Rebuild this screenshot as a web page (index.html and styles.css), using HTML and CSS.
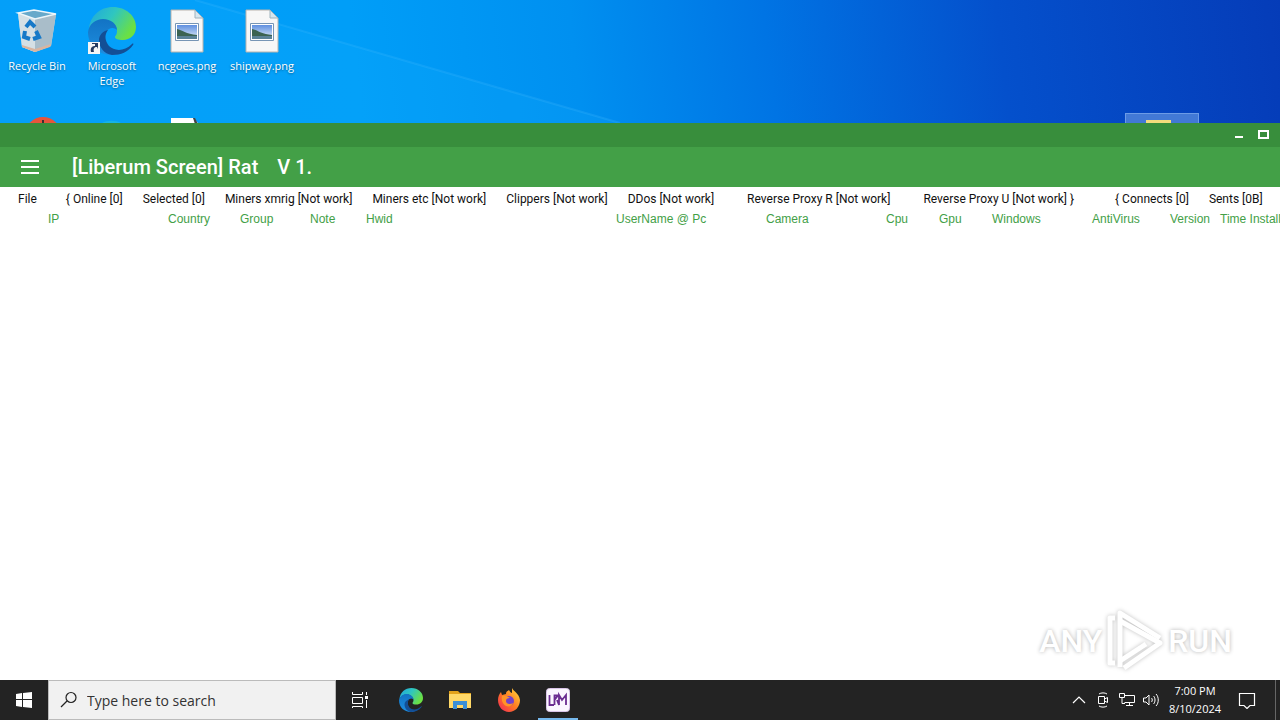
FILE: index.html
```html
<!DOCTYPE html>
<html lang="en">
<head>
    <meta charset="UTF-8">
    <title>Desktop</title>
    <link rel="stylesheet" href="styles.css">
</head>
<body>
<svg class="defs" aria-hidden="true">
    <defs>
        <linearGradient id="edgeGreen" x1="0" y1="0" x2="1" y2="0.5">
            <stop offset="0" stop-color="#1fa5e0"/>
            <stop offset="0.5" stop-color="#2fc6c0"/>
            <stop offset="1" stop-color="#6be043"/>
        </linearGradient>
        <linearGradient id="edgeBlue" x1="0" y1="0" x2="0" y2="1">
            <stop offset="0" stop-color="#1273c4"/>
            <stop offset="1" stop-color="#1e8fe0"/>
        </linearGradient>
        <linearGradient id="sky" x1="0" y1="0" x2="0" y2="1">
            <stop offset="0" stop-color="#5f8fe0"/>
            <stop offset="1" stop-color="#e6f0f8"/>
        </linearGradient>
        <linearGradient id="fire" x1="1" y1="0" x2="0" y2="1">
            <stop offset="0" stop-color="#ffe23e"/>
            <stop offset="0.5" stop-color="#ff7a22"/>
            <stop offset="1" stop-color="#f0235c"/>
        </linearGradient>
        <symbol id="edge" viewBox="0 0 48 48">
            <path d="M1 22C2 9 12 0 25 0c13 0 23 9 23 20 0 8-6 13-13 13-5 0-8-1-8-3 0-1 2-2 2-6 0-6-6-11-13-11C9 13 3 17 1 22z" fill="url(#edgeGreen)"/>
            <path d="M0 25C1 17 8 12 15 12c8 0 14 5 14 11-2-2-5-3-8-1-4 2-5 7-3 13 2 7 8 12 14 12-3 1-5 1-8 1C10 48 0 38 0 25z" fill="url(#edgeBlue)"/>
            <path d="M20 23c-4 5-3 11 1 16 5 5 15 6 23-2 1-1 2 0 1 1-5 7-12 10-21 10-8-1-13-8-13-15 0-5 4-9 9-10z" fill="#134f96"/>
        </symbol>
        <symbol id="picture" viewBox="0 0 48 48">
            <path d="M8 3h24l8 8v34H8z" fill="#f7f7f7" stroke="#b9b3ad"/>
            <path d="M32 3v8h8z" fill="#d6e6ef" stroke="#9fb2bd"/>
            <path d="M12.500 16.500h23v17h-23z" fill="#fff" stroke="#7795b5"/>
            <path d="M14 18h20v14H14z" fill="url(#sky)"/>
            <path d="M14 22c5 1 9 5 20 6v2H14z" fill="#3b6351"/>
            <path d="M14 29h20v3H14z" fill="#5a8296"/>
        </symbol>
    </defs>
</svg>

<main class="desktop">
    <svg class="beam" viewBox="0 0 1280 123" preserveAspectRatio="none" aria-hidden="true">
        <path d="M195 0L620 123H0V0z" fill="#19b4ff" opacity="0.15"/>
        <path d="M195 0L620 123" stroke="#4fc0ff" stroke-width="2" opacity="0.2"/>
    </svg>
    <ul class="icons">
        <li class="icon">
            <svg viewBox="0 0 48 48">
                <path d="M5 6l38 1-5 32-16 6-13-5z" fill="#c9d7df"/>
                <path d="M22 12l21-5-5 32-16 6z" fill="#a9bdc9"/>
                <path d="M5 6l17 6v33L9 40z" fill="#d5e0e5"/>
                <path d="M5 6l16-3 22 4-21 5z" fill="#68a9ca" stroke="#eef6fa" stroke-width="1.500"/>
                <path d="M9 38l13 4 16-5-1 3-15 5-13-5z" fill="#d9b5a0"/>
                <g fill="none" stroke="#1679c8" stroke-width="4">
                    <path d="M13 20l4-5 5 5"/>
                    <path d="M23 24l3 6-6 2"/>
                    <path d="M17 32l-6-2 1-6"/>
                </g>
            </svg>
            <span>Recycle Bin</span>
        </li>
        <li class="icon">
            <svg viewBox="0 0 48 48">
                <use href="#edge"/>
                <path d="M0 35h12v12H0z" fill="#f5f5f5"/>
                <path d="M3 45c-1-4 1-6 4-6v-2H4v-1h6v6l-1-2c-3 0-4 2-3 5z" fill="#25395f"/>
            </svg>
            <span>Microsoft Edge</span>
        </li>
        <li class="icon">
            <svg><use href="#picture"/></svg>
            <span>ncgoes.png</span>
        </li>
        <li class="icon">
            <svg><use href="#picture"/></svg>
            <span>shipway.png</span>
        </li>
        <li class="icon second">
            <svg viewBox="0 0 48 48">
                <circle cx="30" cy="21" r="18" fill="#e6553c"/>
                <path d="M29 6h2v5h-2z" fill="#3c2f2f"/>
            </svg>
        </li>
        <li class="icon second">
            <svg viewBox="0 0 48 48"><path d="M14 9c5-3 14-3 19 0z" fill="#16b3e6"/></svg>
        </li>
        <li class="icon second">
            <svg viewBox="0 0 48 48"><path d="M8 4h22l6 6v34H8z" fill="#fff"/><path d="M30 4h2l3 6h-3z" fill="#444"/></svg>
        </li>
        <li class="icon second folder">
            <svg viewBox="0 0 48 48"><path d="M8 6h25v30H8z" fill="#f3dc7c"/></svg>
        </li>
    </ul>
</main>

<section class="window">
    <div class="caption">
        <button class="caption-btn" aria-label="Minimize"><svg viewBox="0 0 12 12"><path d="M2 9h8" stroke="#fff" stroke-width="2"/></svg></button>
        <button class="caption-btn" aria-label="Maximize"><svg viewBox="0 0 12 12"><path d="M2 3h9v7H2z" fill="none" stroke="#fff" stroke-width="2"/></svg></button>
    </div>
    <header class="title-bar">
        <button class="drawer-btn" aria-label="Menu"><svg viewBox="0 0 18 16"><path d="M0 2h18M0 8h18M0 14h18" stroke="#fff" stroke-width="2"/></svg></button>
        <h1 class="title">[Liberum Screen] Rat</h1>
        <span class="title">V 1.</span>
    </header>
    <nav class="menu">
        <button>File</button>
        <button class="apart">{ Online [0]</button>
        <button>Selected [0]</button>
        <button>Miners xmrig [Not work]</button>
        <button>Miners etc [Not work]</button>
        <button>Clippers [Not work]</button>
        <button>DDos [Not work]</button>
        <button class="proxy">Reverse Proxy R [Not work]</button>
        <button class="proxy">Reverse Proxy U [Not work] }</button>
        <button class="totals">{ Connects [0]</button>
        <button>Sents [0B]</button>
    </nav>
    <div class="list">
        <table class="clients">
            <colgroup>
                <col class="w120"><col class="w72"><col class="w70"><col class="w56"><col class="w250">
                <col class="w150"><col class="w120"><col class="w53"><col class="w53"><col class="w100">
                <col class="w78"><col class="w50"><col class="w120">
            </colgroup>
            <thead>
                <tr>
                    <th>IP</th>
                    <th>Country</th>
                    <th>Group</th>
                    <th>Note</th>
                    <th>Hwid</th>
                    <th>UserName @ Pc</th>
                    <th>Camera</th>
                    <th>Cpu</th>
                    <th>Gpu</th>
                    <th>Windows</th>
                    <th>AntiVirus</th>
                    <th>Version</th>
                    <th>Time Install</th>
                </tr>
            </thead>
        </table>
    </div>
    <div class="watermark">
        <span>ANY</span>
        <svg viewBox="0 0 58 64">
            <g fill="none" stroke="#fff" stroke-width="5" stroke-linejoin="round">
                <path d="M9 9H4v45h5"/>
                <path d="M14 58V4l40 25"/>
                <path d="M14 12l40 22-36 25"/>
                <path d="M14 52l26-17"/>
            </g>
        </svg>
        <span>RUN</span>
    </div>
</section>

<footer class="taskbar">
    <button class="start" aria-label="Start">
        <svg viewBox="0 0 16 16"><path d="M0 2l6-1v6H0zM7 1l9-1v7H7zM0 8h6v7l-6-1zM7 8h9v8l-9-1z" fill="#fff"/></svg>
    </button>
    <label class="search">
        <svg viewBox="0 0 18 18"><g fill="none" stroke="#222" stroke-width="1.200"><circle cx="11" cy="6.500" r="5"/><path d="M7 10L1 16"/></g></svg>
        <input type="text" placeholder="Type here to search" aria-label="Search">
    </label>
    <div class="pinned">
        <button class="task" aria-label="Task View">
            <svg class="small" viewBox="0 0 18 18"><path d="M1.500 1v2.500h10V1M1.500 6.500h10v6h-10zM1.500 17v-1.500h10V17M15.500 1v3M15.500 9v8" fill="none" stroke="#fff"/><path d="M14 5h3v3h-3z" fill="#fff"/></svg>
        </button>
        <button class="task" aria-label="Edge"><svg><use href="#edge"/></svg></button>
        <button class="task" aria-label="File Explorer">
            <svg viewBox="0 0 24 24">
                <path d="M1 3h9l2 2h11v4H1z" fill="#e3a21a"/>
                <path d="M1 6h22v14H1z" fill="#ffd867"/>
                <path d="M5 21v-8h14v8h-4v-4H9v4z" fill="#3a8fd6"/>
            </svg>
        </button>
        <button class="task" aria-label="Firefox">
            <svg viewBox="0 0 24 24">
                <path d="M15 0c1 3 7 5 8 12 0 7-5 12-11 12S1 19 1 12c0-3 1-6 3-8l1 3 4-1c0-3 2-3 3-4 1 2 2 3 3 3z" fill="url(#fire)"/>
                <circle cx="12" cy="13" r="5" fill="#7442c8"/>
                <path d="M5 8c3-1 5 0 8 2-3 0-4 1-4 3 0 3 4 4 7 2-1 3-4 4-7 3-3-2-5-5-4-10z" fill="#ff9427"/>
            </svg>
        </button>
        <button class="task active" aria-label="LRM">
            <svg viewBox="0 0 24 24">
                <rect x="0.500" y="0.500" width="23" height="23" rx="3" fill="#fbf6ff" stroke="#d9c5e8"/>
                <path d="M3.500 7v10H8M8.500 17V7.500H12L8.500 12M11 12l2 5V7l3 5 4-5v10" fill="none" stroke="#6b2d91" stroke-width="1.800"/>
            </svg>
        </button>
    </div>
    <div class="tray">
        <svg viewBox="0 0 16 16"><path d="M2 11l6-6 6 6" fill="none" stroke="#fff" stroke-width="1.200"/></svg>
        <svg viewBox="0 0 16 16"><path d="M4 2c2-1.500 6-1.500 8 0M4 14c2 1.500 6 1.500 8 0M3.500 4.500h6v7h-6zM9.500 7l3-1.500v5l-3-1.500" fill="none" stroke="#fff"/></svg>
        <svg viewBox="0 0 16 16"><path d="M5.500 3.500h10v7h-10M10.500 10.500v3M7 13.500h7M.500 1.500h5v4h-5zM3 5.500v6h3" fill="none" stroke="#fff"/></svg>
        <svg viewBox="0 0 16 16"><path d="M.500 6v4H3l3 3V3L3 6zM8.500 6c1 1 1 3 0 4M10.500 4c2 2 2 6 0 8M13 2c3 3 3 9 0 12" fill="none" stroke="#fff"/></svg>
    </div>
    <div class="clock">
        <time>7:00 PM</time>
        <time>8/10/2024</time>
    </div>
    <button class="notify" aria-label="Notifications">
        <svg viewBox="0 0 18 18"><path d="M1.500 2.500h15v12H12l-3 3-3-3H1.500z" fill="none" stroke="#fff" stroke-width="1.200"/></svg>
    </button>
    <button class="peek" aria-label="Show desktop"></button>
</footer>
</body>
</html>
```
FILE: styles.css
```css
* {
    padding: 0;
    margin: 0;
    box-sizing: border-box;
    list-style: none;
}

body {
    display: flex;
    flex-direction: column;
    height: 100vh;
    overflow: hidden;
    font-family: "Open Sans", "Noto Sans", sans-serif;
    font-size: 12px;
}

button, input {
    border: 0;
    background: none;
    font: inherit;
    color: inherit;
}

svg {
    display: block;
    flex: none;
}

.defs {
    position: absolute;
    width: 0;
    height: 0;
}

/* desktop */
.desktop {
    position: relative;
    flex: none;
    height: 123px;
    overflow: hidden;
    background: linear-gradient(83deg, #009cf8 0%, #009ef8 28%, #0090f0 45%, #0074e4 60%, #0450cc 78%, #053cb8 100%);
}

.beam {
    position: absolute;
    width: 100%;
    height: 100%;
}

.icons {
    position: relative;
    display: grid;
    grid-template-columns: repeat(auto-fill, 75px);
    grid-auto-rows: 107px;
    padding-top: 6px;
}

.icon {
    display: flex;
    flex-direction: column;
    align-items: center;
    gap: 3px;
    margin-right: 1px;
    padding-top: 1px;
    font-size: 11px;
    line-height: 15px;
    text-align: center;
    color: #fff;
    text-shadow: 0 1px 2px rgba(0, 0, 0, 0.4);
}

.icon svg {
    width: 48px;
    height: 48px;
}

.second {
    grid-row: 2;
}

.folder {
    grid-column: 16;
    background: #4279d6;
    border: 1px solid #6c9be6;
    padding-top: 0;
}

/* application window */
.window {
    position: relative;
    flex: 1;
    min-height: 0;
    overflow: hidden;
    background: #fff;
    font-family: "Liberation Sans", Arial, sans-serif;
}

.caption {
    display: flex;
    justify-content: flex-end;
    gap: 12px;
    height: 24px;
    padding: 5px 11px 0 0;
    background: #388e3c;
}

.caption-btn,
.caption-btn svg {
    width: 12px;
    height: 12px;
}

.title-bar {
    display: flex;
    align-items: center;
    gap: 19px;
    height: 40px;
    padding-left: 21px;
    background: #43a047;
    color: #fff;
}

.drawer-btn {
    margin-right: 14px;
}

.drawer-btn svg {
    width: 18px;
    height: 16px;
}

.title {
    font: 500 20px/24px Roboto, sans-serif;
    white-space: nowrap;
}

.menu {
    display: flex;
    gap: 20px;
    height: 24px;
    padding-left: 18px;
    font-family: Roboto, sans-serif;
    line-height: 24px;
    color: #111;
}

.menu button {
    flex: none;
    white-space: nowrap;
}

.menu .apart {
    margin-left: 9px;
}

.menu .proxy {
    margin-left: 13px;
}

.menu .totals {
    margin-left: 21px;
}

.list {
    overflow: hidden;
    padding-left: 48px;
}

.clients {
    table-layout: fixed;
    width: 1292px;
    border-collapse: collapse;
}

.clients th {
    line-height: 16px;
    font-weight: normal;
    text-align: left;
    white-space: nowrap;
    color: #43a047;
}

.w50 { width: 50px; }
.w53 { width: 53px; }
.w56 { width: 56px; }
.w70 { width: 70px; }
.w72 { width: 72px; }
.w78 { width: 78px; }
.w100 { width: 100px; }
.w120 { width: 120px; }
.w150 { width: 150px; }
.w250 { width: 250px; }

.watermark {
    position: absolute;
    right: 48px;
    bottom: 7px;
    display: flex;
    align-items: center;
    gap: 4px;
    font: 500 32px/40px "Liberation Sans Narrow", Roboto, sans-serif;
    color: #fff;
    text-shadow: 0 0 4px rgba(0, 0, 0, 0.3);
}

.watermark svg {
    width: 58px;
    height: 64px;
    filter: drop-shadow(0 0 2px rgba(0, 0, 0, 0.25));
}

/* taskbar */
.taskbar {
    display: flex;
    flex: none;
    height: 40px;
    background: #232323;
    color: #fff;
}

.taskbar button {
    display: flex;
    align-items: center;
    justify-content: center;
    width: 48px;
}

.start svg {
    width: 16px;
    height: 16px;
}

.search {
    display: flex;
    align-items: center;
    gap: 9px;
    width: 288px;
    padding-left: 11px;
    border: 1px solid #bbb;
    background: #f1f1f1;
}

.search svg {
    width: 18px;
    height: 18px;
}

.search input {
    width: 230px;
    font-size: 14px;
    color: #333;
    outline: 0;
}

.search input::placeholder {
    color: #333;
}

.pinned {
    display: flex;
    flex: 1;
    gap: 9px;
    padding-left: 6px;
}

.taskbar .task {
    width: 40px;
}

.task svg {
    width: 24px;
    height: 24px;
}

.task .small {
    width: 18px;
    height: 18px;
    margin-right: 4px;
}

.active {
    border-bottom: 2px solid #76b9ed;
    padding-top: 2px;
}

.tray {
    display: flex;
    align-items: center;
    gap: 8px;
    padding-right: 8px;
}

.tray svg {
    width: 16px;
    height: 16px;
}

.clock {
    display: flex;
    flex-direction: column;
    justify-content: center;
    width: 56px;
    font-size: 11px;
    line-height: 18px;
    text-align: center;
}

.notify svg {
    width: 18px;
    height: 18px;
}

.taskbar .peek {
    width: 5px;
    margin-left: 4px;
    border-left: 1px solid #666;
}
```
